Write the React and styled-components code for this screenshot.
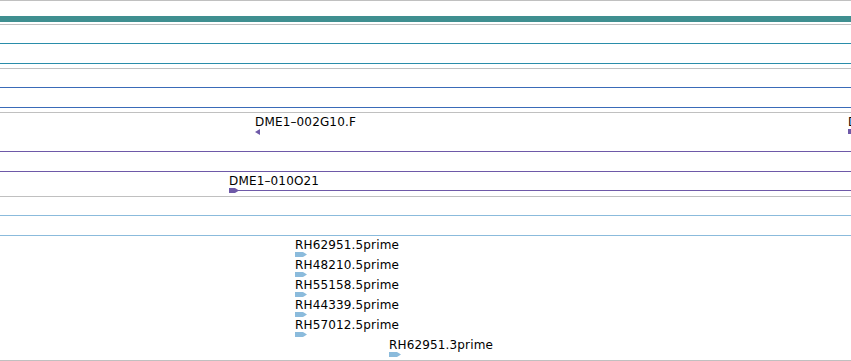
import React from 'react';
import styled, { createGlobalStyle } from 'styled-components';

const GlobalStyle = createGlobalStyle`
  html, body {
    margin: 0;
    padding: 0;
    background: #fff;
  }
  body {
    font-family: "DejaVu Sans", "Liberation Sans", sans-serif;
  }
`;

const GRAY = '#c0c0c0';

const Browser = styled.div`
  width: 851px;
  overflow: hidden;
  background: #fff;
  border-bottom: 1px solid ${GRAY};
`;

const ScaleTrack = styled.div`
  border-top: 1px solid ${GRAY};
  padding: 15px 0 2px;
`;

const ScaleBar = styled.div`
  height: 6px;
  background: #3f8f90;
`;

const Track = styled.div`
  border-top: 1px solid ${GRAY};
  display: flex;
  flex-direction: column;
  padding-bottom: 4px;
`;

const Spacer = styled.div`
  height: 18px;
`;

const Band = styled.div`
  height: 19px;
  border-top: 1px solid ${(p) => p.color};
  border-bottom: 1px solid ${(p) => p.color};
`;

const Row = styled.div`
  position: relative;
  height: 20px;
`;

const Feature = styled.div`
  position: absolute;
  top: 2px;
  display: flex;
  flex-direction: column;
  align-items: flex-start;
`;

const Label = styled.span`
  font-size: 12px;
  line-height: 14px;
  letter-spacing: 0.15px;
  color: #000;
  white-space: nowrap;
`;

const Glyph = ({ kind, color, width }) => {
  if (kind === 'rev') {
    return (
      <svg width="6" height="6" style={{ display: 'block' }}>
        <polygon points="5,0 5,6 0,3" fill={color} />
      </svg>
    );
  }
  if (kind === 'box') {
    return (
      <svg width="6" height="6" style={{ display: 'block' }}>
        <rect x="0" y="0" width="6" height="5" fill={color} />
      </svg>
    );
  }
  if (kind === 'span') {
    return (
      <svg width={width} height="6" style={{ display: 'block' }}>
        <line x1="8" y1="2.5" x2={width} y2="2.5" stroke={color} strokeWidth="1" />
        <polygon points="0,0 6,0 10,2.5 6,5 0,5" fill={color} />
      </svg>
    );
  }
  return (
    <svg width="12" height="6" style={{ display: 'block' }}>
      <polygon points="0,0 8,0 12,2.5 8,5 0,5" fill={color} />
    </svg>
  );
};

const FeatureRow = ({ items, color }) => (
  <Row>
    {items.map((f) => (
      <Feature key={f.label} style={{ left: f.x }}>
        <Label>{f.label}</Label>
        <Glyph kind={f.kind} color={color} width={851 - f.x} />
      </Feature>
    ))}
  </Row>
);

const PURPLE = '#6e59a8';
const LIGHTBLUE = '#8bbbdc';

const rhRows = [
  [{ x: 295, label: 'RH62951.5prime', kind: 'fwd' }],
  [{ x: 295, label: 'RH48210.5prime', kind: 'fwd' }],
  [{ x: 295, label: 'RH55158.5prime', kind: 'fwd' }],
  [{ x: 295, label: 'RH44339.5prime', kind: 'fwd' }],
  [{ x: 295, label: 'RH57012.5prime', kind: 'fwd' }],
  [{ x: 389, label: 'RH62951.3prime', kind: 'fwd' }],
];

export default function App() {
  return (
    <>
      <GlobalStyle />
      <Browser>
        <ScaleTrack>
          <ScaleBar />
        </ScaleTrack>

        <Track>
          <Spacer />
          <Band color="#2a8daa" />
        </Track>

        <Track>
          <Spacer />
          <Band color="#3a6bb8" />
        </Track>

        <Track>
          <FeatureRow
            color={PURPLE}
            items={[
              { x: 255, label: 'DME1–002G10.F', kind: 'rev' },
              { x: 848, label: 'DME1–002G11.F', kind: 'box' },
            ]}
          />
          <Spacer />
          <Band color={PURPLE} />
          <FeatureRow color={PURPLE} items={[{ x: 229, label: 'DME1–010O21', kind: 'span' }]} />
        </Track>

        <Track>
          <Spacer />
          <Band color={LIGHTBLUE} />
          {rhRows.map((items, i) => (
            <FeatureRow key={i} color={LIGHTBLUE} items={items} />
          ))}
        </Track>
      </Browser>
    </>
  );
}
